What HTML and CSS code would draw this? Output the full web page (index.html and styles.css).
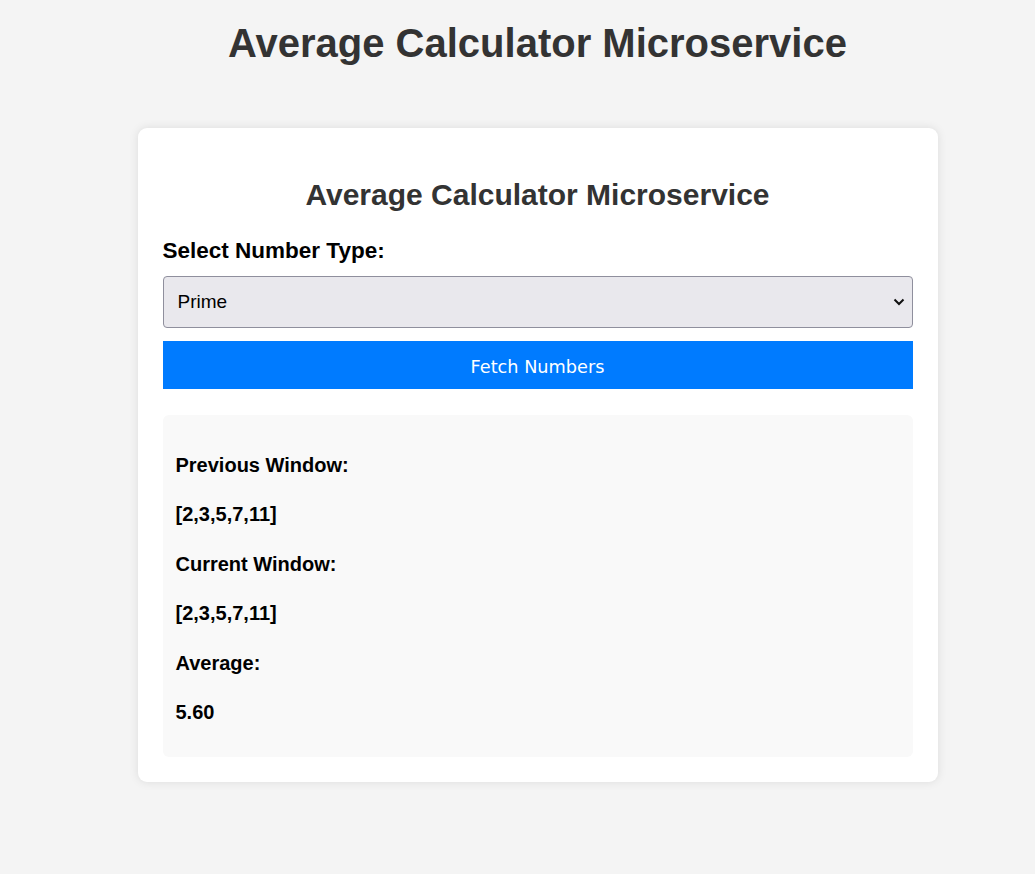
FILE: index.html
```html
<!DOCTYPE html>
<html lang="en">
<head>
<meta charset="utf-8">
<title>Average Calculator Microservice</title>
<link rel="stylesheet" href="styles.css">
</head>
<body>
<div class="page">
  <h1 class="page-title">Average Calculator Microservice</h1>
  <div class="card">
    <h2 class="card-title">Average Calculator Microservice</h2>
    <label class="field-label" for="type">Select Number Type:</label>
    <div class="select-wrap">
      <select id="type" class="select">
        <option>Prime</option>
        <option>Fibonacci</option>
        <option>Even</option>
        <option>Random</option>
      </select>
      <svg class="chevron" width="12" height="8" viewBox="0 0 12 8"><path d="M1.5 1.5 L6 6 L10.5 1.5" fill="none" stroke="#111" stroke-width="2"/></svg>
    </div>
    <button class="fetch-btn" type="button">Fetch Numbers</button>
    <div class="results">
      <p class="line">Previous Window:</p>
      <p class="line">[2,3,5,7,11]</p>
      <p class="line">Current Window:</p>
      <p class="line">[2,3,5,7,11]</p>
      <p class="line">Average:</p>
      <p class="line">5.60</p>
    </div>
  </div>
</div>
</body>
</html>
```
FILE: styles.css
```css
html, body {
  margin: 0;
  padding: 0;
}
body {
  background: #f4f4f4;
  font-family: "Liberation Sans", Arial, sans-serif;
  color: #000;
}
.page {
  padding: 20px 0 40px 40px;
  display: flex;
  flex-direction: column;
  align-items: center;
}
.page-title {
  margin: 0;
  font-size: 40px;
  font-weight: bold;
  color: #333;
  line-height: 46px;
  text-align: center;
}
.card {
  margin-top: 62px;
  width: 800px;
  box-sizing: border-box;
  background: #fff;
  border-radius: 9px;
  box-shadow: 0 0 10px rgba(0, 0, 0, 0.1);
  padding: 25px;
  display: flex;
  flex-direction: column;
}
.card-title {
  margin: 25px 0 25px;
  font-size: 30px;
  line-height: 34.5px;
  color: #333;
  text-align: center;
}
.field-label {
  font-size: 22.5px;
  font-weight: bold;
  line-height: 25px;
  margin-bottom: 13px;
}
.select-wrap {
  position: relative;
}
.select {
  width: 100%;
  height: 52px;
  box-sizing: border-box;
  appearance: none;
  -webkit-appearance: none;
  background: #e9e8ed;
  border: 1px solid #8f8f9d;
  border-radius: 4px;
  padding: 0 14px;
  font-family: "Liberation Sans", Arial, sans-serif;
  font-size: 19px;
  color: #000;
}
.chevron {
  position: absolute;
  right: 8px;
  top: 22px;
  pointer-events: none;
}
.fetch-btn {
  margin-top: 13px;
  height: 48px;
  border: none;
  background: #007bff;
  color: #fff;
  font-family: "DejaVu Sans", Tahoma, sans-serif;
  font-size: 17.7px;
  padding: 5px 0 0;
}
.results {
  margin-top: 26px;
  background: #f9f9f9;
  border-radius: 6px;
  padding: 39px 13px 33px;
  display: flex;
  flex-direction: column;
  gap: 26.6px;
}
.line {
  margin: 0;
  font-size: 20px;
  font-weight: bold;
  line-height: 23px;
}
```
